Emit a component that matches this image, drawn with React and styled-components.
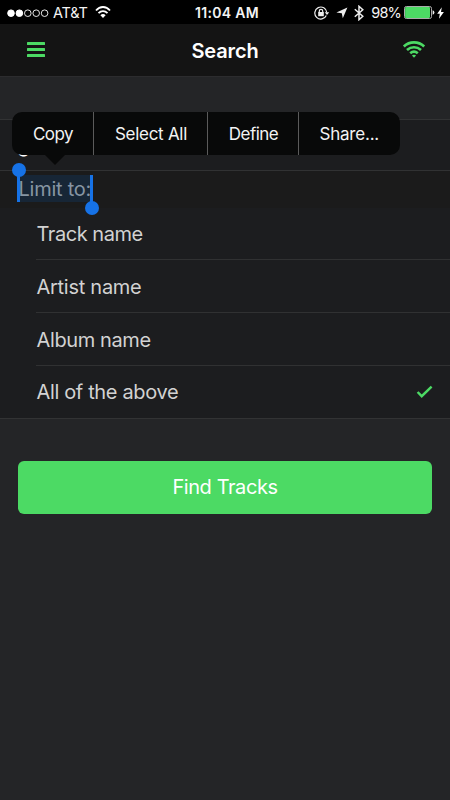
import React from 'react';
import styled, { createGlobalStyle } from 'styled-components';

const green = '#4cda64';

const GlobalStyle = createGlobalStyle`
  *, *::before, *::after { box-sizing: border-box; }
  html, body { margin: 0; padding: 0; background: #242527; }
  body { font-family: Inter, "Liberation Sans", sans-serif; }
`;

const Screen = styled.div`
  width: 450px;
  height: 800px;
  overflow: hidden;
  display: flex;
  flex-direction: column;
  background: #242527;
  color: #d2d2d2;
`;

const StatusBar = styled.header`
  height: 24px;
  flex: none;
  background: #000;
  color: #f4f4f4;
  display: grid;
  grid-template-columns: 1fr 68px 1fr;
  align-items: center;
  padding: 0 6px 0 7px;
  font-size: 14.5px;
  line-height: 24px;
  white-space: nowrap;
`;

const StatusGroup = styled.div`
  display: flex;
  align-items: center;
  height: 24px;
  justify-content: ${(p) => (p.$end ? 'flex-end' : 'flex-start')};
  svg { display: block; flex: none; }
`;

const StatusGap = styled.span`
  width: ${(p) => (p.$small ? 2 : 6)}px;
  flex: none;
`;

const Carrier = styled.span`
  margin: 1px 7px 0 4px;
  letter-spacing: -0.2px;
`;

const Clock = styled.span`
  margin-top: 1px;
  padding-left: 3px;
  font-weight: 600;
  font-size: 14px;
  letter-spacing: 0.3px;
  text-align: center;
`;

const Percent = styled.span`
  margin: 1px 3px 0 7px;
  letter-spacing: -0.8px;
`;

const NavBar = styled.nav`
  height: 53px;
  flex: none;
  background: #141414;
  border-bottom: 1px solid #2c2c2e;
  display: grid;
  grid-template-columns: 24px 1fr 24px;
  align-items: center;
  padding: 0 24px;
  svg { display: block; }
`;

const Title = styled.h1`
  margin: 2px 0 0;
  color: #fff;
  text-align: center;
  font-size: 20px;
  font-weight: 600;
  line-height: 50px;
  letter-spacing: -0.15px;
`;

const Form = styled.main`
  margin-top: 42px;
  display: flex;
  flex-direction: column;
`;

const Query = styled.div`
  height: 51px;
  background: #1c1d1f;
  border-top: 1px solid #323334;
  padding: 0 17.5px;
  color: #fff;
  font-size: 20px;
  line-height: 51px;
  position: relative;
`;

const LimitHeader = styled.div`
  height: 38px;
  background: #1b1b1b;
  border-top: 1px solid #313233;
  padding: 4px 18px 0;
`;

const Selection = styled.span`
  position: relative;
  display: block;
  width: 75px;
  height: 27px;
  padding-left: 0.5px;
  background: #172636;
  color: #8695a3;
  font-size: 20px;
  line-height: 28px;
  letter-spacing: -0.25px;
  white-space: nowrap;
`;

const Handle = styled.i`
  position: absolute;
  top: 0;
  ${(p) => (p.$start ? 'left: -1px;' : 'right: 0;')}
  width: 3px;
  height: 27px;
  background: #1672e6;
  &::after {
    content: '';
    position: absolute;
    left: -5.5px;
    ${(p) => (p.$start ? 'top: -12.5px;' : 'bottom: -13px;')}
    width: 14px;
    height: 14px;
    border-radius: 50%;
    background: #1672e6;
  }
`;

const Options = styled.ul`
  list-style: none;
  margin: 0;
  height: 211px;
  padding: 0 0 0 36px;
  background: #1c1d1f;
  border-bottom: 1px solid #323334;
  display: grid;
  grid-template-rows: 52px 53px 53px 52px;
`;

const Option = styled.li`
  display: flex;
  align-items: center;
  justify-content: space-between;
  padding: 1px 17px 0 0.5px;
  font-size: 20px;
  letter-spacing: ${(p) => p.$tracking}px;
  border-bottom: 1px solid #303132;
  &:last-child { border-bottom: 0; padding-top: 0; }
`;

const FindButton = styled.button`
  margin: 42px 18px 0;
  height: 53px;
  border: 0;
  border-radius: 6px;
  background: ${green};
  color: #fff;
  font: 400 20px/52px Inter, "Liberation Sans", sans-serif;
  letter-spacing: -0.42px;
  padding: 0 0 1px;
`;

const EditMenu = styled.div`
  position: absolute;
  left: 12px;
  top: -8px;
  width: 387.5px;
  height: 43px;
  display: grid;
  grid-template-columns: 82px 114px 91px 100.5px;
  border-radius: 10px;
  background: #080909;
  z-index: 2;
  &::after {
    content: '';
    position: absolute;
    left: 33px;
    top: 43px;
    border: 10px solid transparent;
    border-top-color: #080909;
    border-bottom: 0;
  }
`;

const MenuItem = styled.span`
  display: flex;
  align-items: center;
  justify-content: center;
  padding-left: 1px;
  border-right: 1px solid #5b5b5b;
  font-size: 17px;
  line-height: 20px;
  color: #f3f3f3;
  letter-spacing: ${(p) => p.$tracking}px;
  white-space: nowrap;
  &:last-child { border-right: 0; padding: 0; }
`;

const options = [
  { label: 'Track name', tracking: -0.45 },
  { label: 'Artist name', tracking: -0.27 },
  { label: 'Album name', tracking: -0.38 },
  { label: 'All of the above', tracking: -0.35, checked: true },
];

const menu = [
  { label: 'Copy', tracking: -0.5 },
  { label: 'Select All', tracking: -0.28 },
  { label: 'Define', tracking: -0.5 },
  { label: 'Share...', tracking: -0.22 },
];

const SignalDots = () => (
  <svg width="42" height="10" viewBox="0 0 42 10" fill="none" stroke="#fff">
    {[4, 12.4, 20.8, 29.2, 37.6].map((x, i) => (
      <circle key={x} cx={x} cy="5.2" r="3.3" strokeWidth={i < 2 ? 1 : 0.9} fill={i < 2 ? '#fff' : 'none'} />
    ))}
  </svg>
);

const StatusWifi = () => (
  <svg width="16" height="13" viewBox="0 0 16 13" fill="none" stroke="#fff" strokeWidth="1.8">
    <path d="M1 4.5C5-.2 11-.2 15 4.5M3.5 7.2c2.7-2.9 6.3-2.9 9 0" />
    <path d="M5.4 9.2c1.5-1.6 3.7-1.6 5.2 0L8 11.9z" fill="#fff" stroke="none" />
  </svg>
);

const RotationLock = () => (
  <svg width="16" height="14" viewBox="0 0 16 14" fill="none" stroke="#eee" strokeWidth="1.2">
    <path d="M12.3 9.5A6 6 0 1 1 12.8 6.5" />
    <path d="M10.7 6.3h4.5L13 9z" fill="#eee" stroke="none" />
    <rect x="4.2" y="6" width="5.6" height="4.2" fill="#eee" stroke="none" />
    <path d="M5.3 6.4V5a1.7 1.7 0 0 1 3.4 0v1.4" />
  </svg>
);

const LocationArrow = () => (
  <svg width="12" height="12" viewBox="0 0 12 12" fill="#eee">
    <path d="M11.4.4 6.8 11.3 5.8 6.2.4 5.6z" />
  </svg>
);

const Bluetooth = () => (
  <svg width="10" height="16" viewBox="0 0 10 16" fill="none" stroke="#eee" strokeWidth="1.5">
    <path d="M.8 4.3 8.8 11.3 5 14.7V1.3l3.8 3.4-8 7" />
  </svg>
);

const Battery = () => (
  <svg width="31" height="13" viewBox="0 0 31 13">
    <rect x=".5" y=".5" width="27" height="12" rx="1.8" fill="#000" stroke="#aaa" />
    <rect x="1.1" y="1.1" width="24.9" height="10.8" rx=".8" fill={green} />
    <path d="M28.6 4.2q1.8.3 1.8 2.3t-1.8 2.3z" fill="#eee" />
  </svg>
);

const Bolt = () => (
  <svg width="7" height="12" viewBox="0 0 7 12" fill="#fff">
    <path d="M4.8.3.2 6.8h2.6L2 11.7 6.9 4.9H4z" />
  </svg>
);

const MenuIcon = () => (
  <svg width="24" height="18" viewBox="0 0 24 18" fill={green}>
    <rect x="3" y="1" width="18" height="3" rx=".5" />
    <rect x="3" y="7" width="18" height="3" rx=".5" />
    <rect x="3" y="13" width="18" height="3" rx=".5" />
  </svg>
);

const NavWifi = () => (
  <svg width="24" height="18" viewBox="0 0 24 18" fill="none" stroke={green} strokeWidth="2.7">
    <path d="M1.8 5.5C7.7 0 16.3 0 22.2 5.5" />
    <path d="M5 9c4.2-3.7 9.8-3.7 14 0" />
    <path d="M8.2 12.3c2.4-2 5.2-2 7.6 0" />
    <path d="M9.9 14.5q2.1-1.5 4.2 0L12 16.7z" fill={green} stroke="none" />
  </svg>
);

const CheckIcon = () => (
  <svg width="17" height="14" viewBox="0 0 17 14" fill="none" stroke={green} strokeWidth="2.4">
    <path d="m1.6 7 4.1 4.2L15.6 1.6" />
  </svg>
);

export default function App() {
  return (
    <>
      <GlobalStyle />
      <Screen>
        <StatusBar>
          <StatusGroup>
            <SignalDots />
            <Carrier>AT&amp;T</Carrier>
            <StatusWifi />
          </StatusGroup>
          <Clock>11:04 AM</Clock>
          <StatusGroup $end>
            <RotationLock />
            <StatusGap />
            <LocationArrow />
            <StatusGap />
            <Bluetooth />
            <Percent>98%</Percent>
            <Battery />
            <StatusGap $small />
            <Bolt />
          </StatusGroup>
        </StatusBar>
        <NavBar>
          <MenuIcon />
          <Title>Search</Title>
          <NavWifi />
        </NavBar>
        <Form>
          <Query>
            g
            <EditMenu>
              {menu.map((m) => (
                <MenuItem key={m.label} $tracking={m.tracking}>{m.label}</MenuItem>
              ))}
            </EditMenu>
          </Query>
          <LimitHeader>
            <Selection>
              Limit to:
              <Handle $start />
              <Handle />
            </Selection>
          </LimitHeader>
          <Options>
            {options.map((o) => (
              <Option key={o.label} $tracking={o.tracking}>
                {o.label}
                {o.checked && <CheckIcon />}
              </Option>
            ))}
          </Options>
          <FindButton>Find Tracks</FindButton>
        </Form>
      </Screen>
    </>
  );
}
